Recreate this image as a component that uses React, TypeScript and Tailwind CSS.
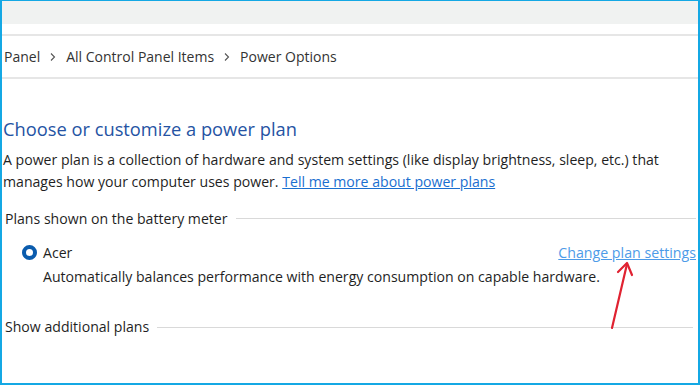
export default function App() {
  return (
    <div
      className="relative w-[700px] h-[385px] overflow-hidden bg-white border-t border-l-2 border-r-2 border-b-2 border-[#14a8e4] text-[#1f1f1f]"
      style={{ fontFamily: '"Open Sans", "Noto Sans", sans-serif' }}
    >
      {/* title bar strip */}
      <div className="h-[23px] bg-[#f0f2f1]" />
      <div className="h-[10px]" />
      <div className="h-[2px] bg-[#e6e6e6]" />

      {/* breadcrumb */}
      <div className="h-[41px] flex items-center gap-[9px] pl-[2px] text-[14px] text-[#333]">
        <span>Panel</span>
        <Chevron />
        <span>All Control Panel Items</span>
        <Chevron />
        <span>Power Options</span>
      </div>
      <div className="h-[2px] bg-[#e6e6e6]" />

      <div className="pl-[1px] pr-[2px]">
        <h1 className="mt-[37px] text-[18.3px] leading-[26px] text-[#2553a3]">Choose or customize a power plan</h1>
        <p className="mt-[7px] text-[14.1px] leading-[22px]">
          A power plan is a collection of hardware and system settings (like display brightness, sleep, etc.) that
          <br />
          manages how your computer uses power.{' '}
          <a className="text-[#1a6fd0] underline">Tell me more about power plans</a>
        </p>

        <div className="mt-[15px] flex items-center gap-[8px] pl-[2px] text-[14.1px]">
          <span className="shrink-0">Plans shown on the battery meter</span>
          <div className="h-px flex-1 bg-[#d9d9d9]" />
        </div>

        <div className="mt-[13px] pl-[19px]">
          <div className="flex items-center justify-between">
            <div className="flex items-center gap-[6px]">
              <span className="w-[15px] h-[15px] rounded-full border-[4px] border-[#0b5cad] bg-white" />
              <span className="text-[14.1px]">Acer</span>
            </div>
            <a className="text-[14.2px] text-[#4d9be8] underline">Change plan settings</a>
          </div>
          <p className="mt-[3px] pl-[21px] text-[14.1px] leading-[22px]">
            Automatically balances performance with energy consumption on capable hardware.
          </p>
        </div>

        <div className="mt-[28px] flex items-center gap-[8px] pl-[2px] pr-[3px] text-[14.1px]">
          <span className="shrink-0">Show additional plans</span>
          <div className="h-px flex-1 bg-[#d9d9d9]" />
        </div>
      </div>

      {/* annotation arrow */}
      <svg className="absolute left-[600px] top-[257px]" width="40" height="75" viewBox="0 0 40 75">
        <path d="M10 70 L25 6" stroke="#e02231" strokeWidth="2.2" fill="none" strokeLinecap="round" />
        <path d="M16 14 L25 5 L30 17" stroke="#e02231" strokeWidth="2.2" fill="none" strokeLinecap="round" strokeLinejoin="round" />
      </svg>
    </div>
  )
}

function Chevron() {
  return (
    <svg width="8" height="10" viewBox="0 0 8 10">
      <path d="M2 1.5 L5.5 5 L2 8.5" stroke="#555" strokeWidth="1.1" fill="none" />
    </svg>
  )
}
